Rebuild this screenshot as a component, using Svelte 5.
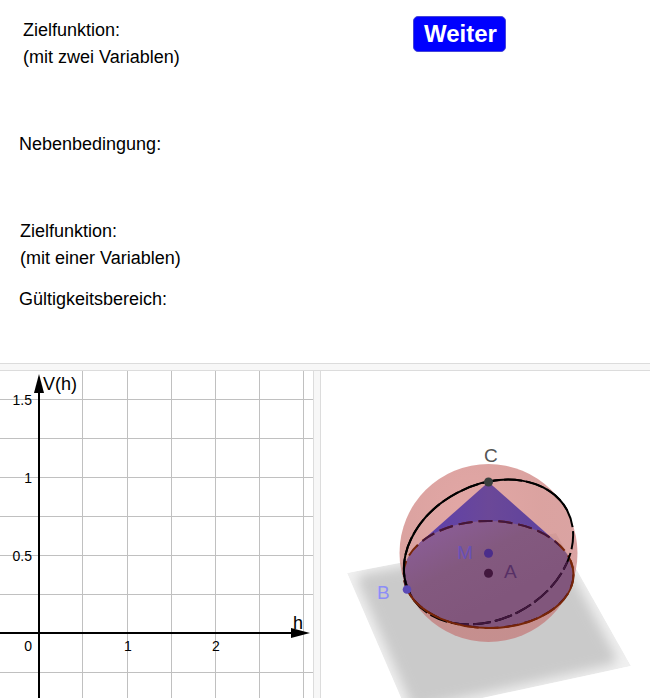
<script lang="ts">
    const gridX = [82, 127, 171, 215, 259, 303];
    const gridY = [28, 67, 106, 145, 184, 223, 301];

    const yLabels = [
        { text: "1.5", y: 34 },
        { text: "1", y: 112 },
        { text: "0.5", y: 190 },
        { text: "0", y: 280 }
    ];
    const xLabels = [
        { text: "1", x: 128 },
        { text: "2", x: 216 }
    ];

    let step = $state(0);

    function nextStep() {
        step += 1;
    }
</script>

<main>
    <section class="notes">
        <div class="labels">
            <p class="goal">Zielfunktion:<br>(mit zwei Variablen)</p>
            <p class="constraint">Nebenbedingung:</p>
            <p class="single">Zielfunktion:<br>(mit einer Variablen)</p>
            <p class="range">Gültigkeitsbereich:</p>
        </div>
        <div class="actions">
            <button type="button" onclick={nextStep}>Weiter</button>
        </div>
    </section>

    <div class="divider horizontal"></div>

    <section class="views">
        <svg class="graph" viewBox="0 0 313 327" role="img" aria-label="V(h)">
            <g class="grid">
                {#each gridX as x}
                    <path d="M{x + 0.5} 0V327" />
                {/each}
                {#each gridY as y}
                    <path d="M0 {y + 0.5}H313" />
                {/each}
            </g>
            <path class="axis" d="M39 20V327M0 262H292" />
            <path d="M39 3L44 22H34Z" />
            <path d="M310 262L291 257V267Z" />
            <g class="ticks">
                {#each yLabels as label}
                    <text x="32" y={label.y} text-anchor="end">{label.text}</text>
                {/each}
                {#each xLabels as label}
                    <text x={label.x} y="280" text-anchor="middle">{label.text}</text>
                {/each}
            </g>
            <text x="43" y="19">V(h)</text>
            <text x="293" y="258">h</text>
        </svg>

        <div class="divider vertical"></div>

        <svg class="scene" viewBox="0 0 329 327" role="img" aria-label="Kegel in einer Kugel">
            <defs>
                <clipPath id="floor">
                    <path d="M26 202L235 162L310 295L87 343Z" />
                </clipPath>
                <clipPath id="cone">
                    <path d="M167 111L98 172L82 204A85 53 0 0 0 253 204L237 172Z" />
                </clipPath>
                <filter id="soft" x="-20%" y="-20%" width="140%" height="140%">
                    <feGaussianBlur stdDeviation="6" />
                </filter>
                <radialGradient id="ball" cx="0.4" cy="0.25" r="0.8">
                    <stop offset="0" stop-color="#d06f6c" />
                    <stop offset="0.5" stop-color="#c46864" />
                    <stop offset="1" stop-color="#c26a6a" />
                </radialGradient>
                <linearGradient id="side">
                    <stop offset="0" stop-color="#5c3fae" />
                    <stop offset="0.5" stop-color="#6b4898" />
                    <stop offset="1" stop-color="#5b419f" />
                </linearGradient>
                <linearGradient id="base" x1="0.1" y1="0.1" x2="0.6" y2="0.7">
                    <stop offset="0" stop-color="#8b5d98" />
                    <stop offset="0.5" stop-color="#83597f" />
                    <stop offset="1" stop-color="#81567c" />
                </linearGradient>
            </defs>

            <g clip-path="url(#floor)">
                <path d="M26 202L235 162L310 295L87 343Z" fill="#f0f0f0" />
                <path d="M44 210L228 175L288 287L96 330Z" fill="#cacaca" stroke="#cacaca" stroke-width="14" stroke-linejoin="round" filter="url(#soft)" />
            </g>

            <circle cx="167.5" cy="182" r="89" fill="url(#ball)" fill-opacity="0.61" />
            <path d="M167.5 111L98 172.5Q167 210 237 172.5Z" fill="url(#side)" />
            <ellipse cx="167.5" cy="203.5" rx="85" ry="53.5" fill="url(#base)" />

            <!-- dashed outlines run all the way round, the visible halves lie on top -->
            <g class="curve">
                <ellipse class="rim hidden" cx="167.5" cy="203.5" rx="85" ry="53.5" />
                <ellipse class="hidden long" cx="167.5" cy="181" rx="89" ry="67" transform="rotate(-28 167.5 181)" />
                <g class="shaded" clip-path="url(#cone)">
                    <ellipse class="hidden" cx="167.5" cy="203.5" rx="85" ry="53.5" />
                    <ellipse class="hidden long" cx="167.5" cy="181" rx="89" ry="67" transform="rotate(-28 167.5 181)" />
                </g>
                <ellipse class="front-arc" pathLength="360" cx="167.5" cy="181" rx="89" ry="67" transform="rotate(-28 167.5 181)" />
                <ellipse class="rim front-rim" pathLength="360" cx="167.5" cy="203.5" rx="85" ry="53.5" />
            </g>

            <circle cx="167.5" cy="111" r="4.5" fill="#3a403e" />
            <circle cx="167.5" cy="182.3" r="4.5" fill="#4b2d8b" />
            <circle cx="167.5" cy="202.2" r="4.5" fill="#42173d" />
            <circle cx="86" cy="218.5" r="4.3" fill="#5b4ab6" />
            <g class="points">
                <text x="163" y="91" fill="#555555">C</text>
                <text x="136" y="188" fill="#6950b8">M</text>
                <text x="183" y="207" fill="#573066">A</text>
                <text x="56" y="228" fill="#8d8df8">B</text>
            </g>
        </svg>
    </section>
</main>

<style>
    :global(body) {
        margin: 0;
        background-color: #fff;
    }

    main {
        padding: 0 2px 2px 0;
        font-family: "Liberation Sans", Arial, sans-serif;
        font-size: 18px;
        color: #000;
    }

    .notes {
        display: grid;
        grid-template-columns: 413fr 237fr;
        padding: 16px 0 50px;
    }

    .labels {
        padding: 1px 0 0 19px;
        line-height: 27px;
    }

    .labels p {
        margin: 0;
    }

    .labels .goal {
        padding-left: 4px;
    }

    .labels .constraint {
        margin: 60px 0;
    }

    .labels .single {
        padding-left: 1px;
    }

    .labels .range {
        margin-top: 14px;
    }

    button {
        display: block;
        height: 36px;
        padding: 0 8px 0 10px;
        border: 1px solid #4646d8;
        border-radius: 5px;
        background-color: #0000ff;
        color: #fff;
        font-family: inherit;
        font-size: 24px;
        font-weight: bold;
        line-height: 34px;
        cursor: pointer;
    }

    .divider {
        background-color: #f7f7f7;
        border: 0 solid #dcdcdc;
    }

    .horizontal {
        height: 6px;
        border-width: 1px 0;
    }

    .vertical {
        border-width: 0 1px;
    }

    .views {
        display: grid;
        grid-template-columns: 313fr 8px 329fr;
    }

    svg {
        display: block;
        width: 100%;
    }

    .grid path {
        stroke: #c0c0c0;
    }

    .axis {
        stroke: #000;
        stroke-width: 2;
    }

    .ticks {
        font-size: 14px;
    }

    .points {
        font-size: 19px;
    }

    .curve {
        fill: none;
        stroke: #000;
        stroke-width: 2;
    }

    .curve .rim {
        stroke: #782608;
    }

    .curve .shaded {
        stroke: #42163e;
    }

    .curve .hidden {
        stroke-dasharray: 14 6;
    }

    .curve .long {
        stroke-dasharray: 18 4;
    }

    .curve .front-arc {
        stroke-dasharray: 180 180;
        stroke-dashoffset: 180;
    }

    .curve .front-rim {
        stroke-dasharray: 176 184;
        stroke-dashoffset: 12;
    }
</style>
